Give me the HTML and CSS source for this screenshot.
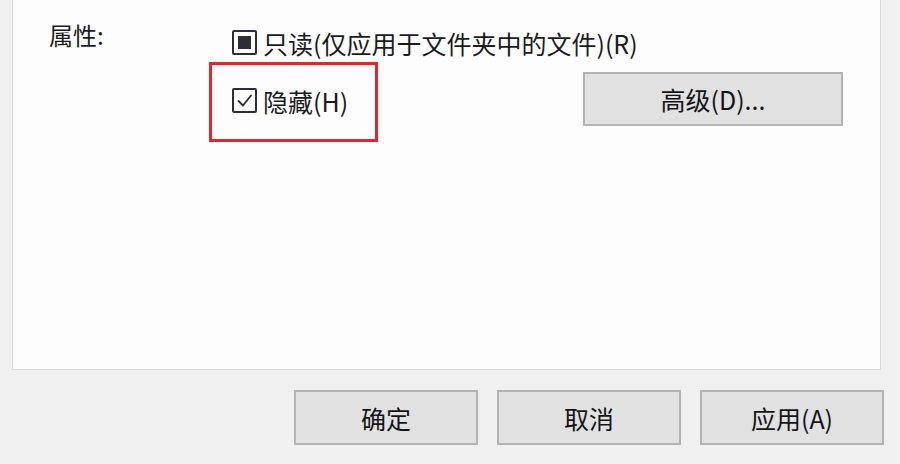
FILE: index.html
```html
<!DOCTYPE html>
<html lang="zh-CN">
<head>
<meta charset="utf-8">
<title>属性</title>
<link rel="stylesheet" href="styles.css">
</head>
<body>
<div class="dialog">
  <div class="panel">
    <div class="props">
      <div class="label">属性:</div>
      <div class="options">
        <div class="option readonly-row">
          <span class="check indeterminate"><span class="fill"></span></span>
          <span class="option-text">只读(仅应用于文件夹中的文件)(R)</span>
        </div>
        <div class="row2">
          <div class="highlight">
            <div class="option">
              <span class="check">
                <svg width="21" height="21" viewBox="0 0 21 21"><path d="M4.5 11 L9 15.5 L17 5.5" fill="none" stroke="#2a2a33" stroke-width="1.8" stroke-linecap="round" stroke-linejoin="round"/></svg>
              </span>
              <span class="option-text">隐藏(H)</span>
            </div>
          </div>
          <div class="btn btn-adv">高级(D)...</div>
        </div>
      </div>
    </div>
  </div>
  <div class="footer">
    <div class="btn">确定</div>
    <div class="btn">取消</div>
    <div class="btn">应用(A)</div>
  </div>
</div>
</body>
</html>
```

FILE: styles.css
```css
* { box-sizing: border-box; }
html, body {
  margin: 0;
  padding: 0;
  background: #f0f0f0;
}
body {
  width: 900px;
  height: 464px;
  overflow: hidden;
  font-family: "Noto Sans CJK SC", "Noto Sans", sans-serif;
  font-size: 25px;
  color: #1b1b1f;
}
.panel {
  margin-left: 12px;
  width: 869px;
  height: 370px;
  background: #fdfdfd;
  border: 1px solid #d9d9d9;
  border-top: none;
  padding: 22px 37px 0 36px;
}
.props {
  display: grid;
  grid-template-columns: 160px 1fr;
}
.label {
  font-size: 24px;
  line-height: 26px;
}
.options {
  display: flex;
  flex-direction: column;
}
.option {
  display: flex;
  align-items: center;
  height: 25px;
}
.readonly-row {
  margin-top: 8px;
  padding-left: 23px;
}
.option-text {
  margin-left: 6px;
  line-height: 25px;
  white-space: nowrap;
  position: relative;
  top: 1px;
}
.check {
  width: 25px;
  height: 25px;
  border: 2px solid #2e2e36;
  border-radius: 2px;
  display: flex;
  align-items: center;
  justify-content: center;
  background: #fff;
  flex: none;
}
.check .fill {
  width: 13px;
  height: 13px;
  background: #2e2e36;
}
.row2 {
  margin-top: 7px;
  display: flex;
  justify-content: space-between;
  align-items: flex-start;
}
.highlight {
  width: 169px;
  height: 80px;
  border: 3px solid #e3262b;
  padding: 23px 0 0 20px;
}
.btn {
  width: 184px;
  height: 55px;
  background: #e1e1e1;
  border: 2px solid #b3b3b3;
  display: flex;
  align-items: center;
  justify-content: center;
  color: #141418;
  white-space: nowrap;
}
.btn-adv {
  width: 260px;
  height: 54px;
  margin-top: 10px;
}
.footer {
  display: flex;
  justify-content: flex-end;
  gap: 19px;
  padding-right: 16px;
  margin-top: 20px;
}
```
